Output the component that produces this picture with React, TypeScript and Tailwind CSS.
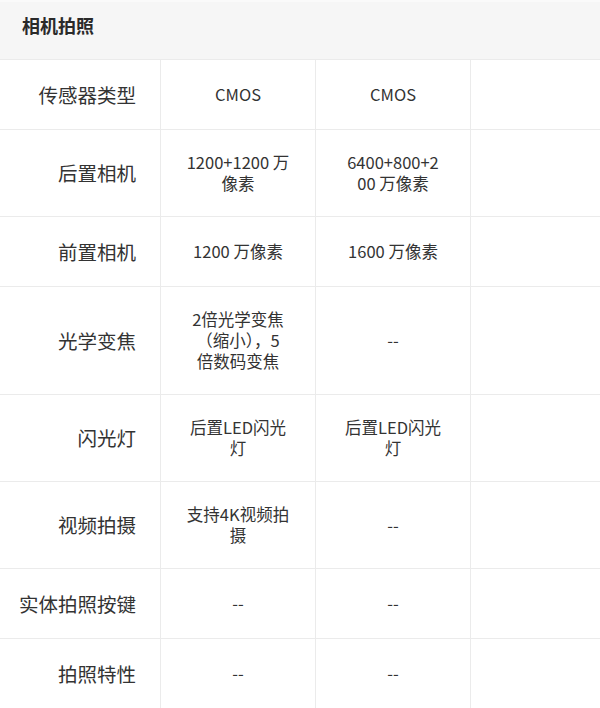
import React from "react"

const rows: { label: string; values: string[][] }[] = [
  { label: "传感器类型", values: [["CMOS"], ["CMOS"]] },
  { label: "后置相机", values: [["1200+1200 万", "像素"], ["6400+800+2", "00 万像素"]] },
  { label: "前置相机", values: [["1200 万像素"], ["1600 万像素"]] },
  { label: "光学变焦", values: [["2倍光学变焦", "（缩小），5", "倍数码变焦"], ["--"]] },
  { label: "闪光灯", values: [["后置LED闪光", "灯"], ["后置LED闪光", "灯"]] },
  { label: "视频拍摄", values: [["支持4K视频拍", "摄"], ["--"]] },
  { label: "实体拍照按键", values: [["--"], ["--"]] },
  { label: "拍照特性", values: [["--"], ["--"]] },
]

export default function App() {
  return (
    <div
      className="w-[600px] h-[708px] overflow-hidden bg-white text-[#333333]"
      style={{ fontFamily: '"Noto Sans CJK SC", "Noto Sans", sans-serif' }}
    >
      {/* Section header */}
      <div className="border-t-2 border-[#fafafa] bg-[#f6f6f6] h-[60px] flex items-center px-[22px] border-b border-b-[#ebebeb]">
        <h2 className="text-[18px] font-bold text-[#2a2a2a] -mt-[10px]">相机拍照</h2>
      </div>

      {/* Spec table */}
      <div>
        {rows.map((row) => (
          <div
            key={row.label}
            className="grid grid-cols-[160px_155px_155px_130px] min-h-[70px] border-b border-[#ebebeb]"
          >
            <div className="flex items-center justify-end pr-[24px] text-[19.5px] leading-[24px] text-[#333]">
              {row.label}
            </div>
            {row.values.map((lines, i) => (
              <div
                key={i}
                className="border-l border-[#ebebeb] flex flex-col items-center justify-center py-[22px] text-[16.5px] leading-[21px] text-center"
              >
                {lines.map((l, j) => (
                  <span key={j} className="whitespace-nowrap">
                    {l}
                  </span>
                ))}
              </div>
            ))}
            <div className="border-l border-[#ebebeb]" />
          </div>
        ))}
      </div>
    </div>
  )
}
